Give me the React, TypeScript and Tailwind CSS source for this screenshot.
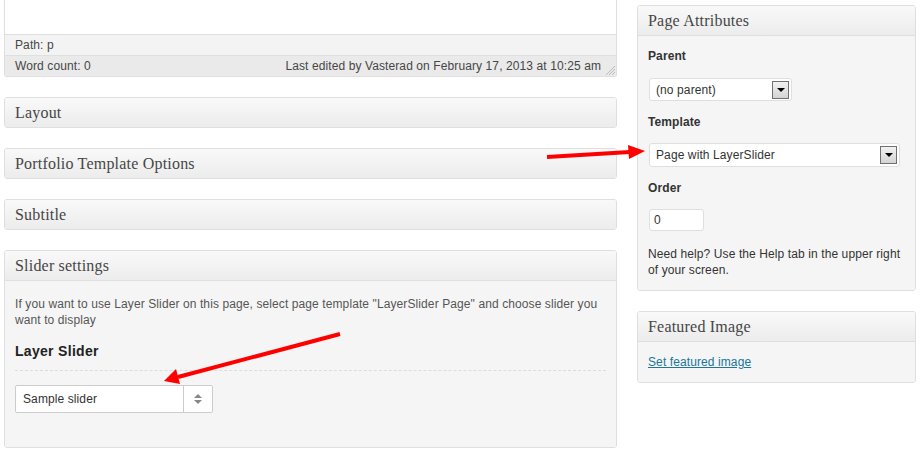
const serif = "font-['Liberation_Serif',Georgia,serif]";

const BoxHeader = ({ title }: { title: string }) => (
  <div className={`h-[29px] flex items-center px-[10px] bg-gradient-to-b from-[#f9f9f9] to-[#ececec] text-[16px] tracking-[0.2px] text-[#464646] ${serif}`}>
    {title}
  </div>
);

const ClosedBox = ({ title }: { title: string }) => (
  <div className="rounded-[3px] border border-[#dfdfdf] overflow-hidden">
    <BoxHeader title={title} />
  </div>
);

const WinSelect = ({ value, width, height }: { value: string; width: string; height: string }) => (
  <div className={`${width} ${height} flex items-center justify-between bg-white border border-[#dfdfdf] rounded-[3px] pl-[6px] pr-[2px] text-[12px] text-[#333]`}>
    <span>{value}</span>
    <span className="w-[17px] h-[18px] flex items-center justify-center border border-[#707070] bg-gradient-to-b from-[#f2f2f2] to-[#d4d4d4]">
      <span className="w-0 h-0 border-l-[4px] border-r-[4px] border-t-[4px] border-l-transparent border-r-transparent border-t-black" />
    </span>
  </div>
);

const App = () => {
  return (
    <div className="relative w-[923px] h-[452px] bg-white overflow-hidden font-['Liberation_Sans',Arial,sans-serif] tracking-[0.1px] text-[#333]">
      <div className="flex">
        <div className="ml-[4px] w-[613px] flex flex-col gap-[20px]">
          <div className="border-x border-b border-[#dfdfdf] rounded-b-[3px] overflow-hidden text-[12px] text-[#464646]">
            <div className="h-[34px] bg-white" />
            <div className="h-[21px] border-t border-[#dfdfdf] bg-[#f3f3f3] flex items-center px-[10px]">Path: p</div>
            <div className="relative h-[21px] border-t border-[#dfdfdf] bg-[#eaeaea] flex items-center justify-between px-[10px]">
              <span>Word count: 0</span>
              <span className="mr-[5px]">Last edited by Vasterad on February 17, 2013 at 10:25 am</span>
              <svg className="absolute right-0 bottom-0" width="12" height="12" viewBox="0 0 12 12">
                <path d="M11 2 L2 11 M11 5 L5 11 M11 8 L8 11" stroke="#bbb" strokeWidth="1" />
              </svg>
            </div>
          </div>
          <ClosedBox title="Layout" />
          <ClosedBox title="Portfolio Template Options" />
          <ClosedBox title="Subtitle" />
          <div className="rounded-[3px] border border-[#dfdfdf] overflow-hidden h-[198px] flex flex-col">
            <BoxHeader title="Slider settings" />
            <div className="flex-1 border-t border-[#dfdfdf] bg-[#f5f5f5] px-[10px] pt-[15px]">
              <p className="text-[12px] leading-[16px] text-[#555]">
                If you want to use Layer Slider on this page, select page template "LayerSlider Page" and choose slider you want to display
              </p>
              <h3 className="mt-[13px] text-[14px] font-bold text-[#222] tracking-[0.3px]">Layer Slider</h3>
              <div className="mt-[8px] border-t border-dashed border-[#dcdcdc]" />
              <div className="mt-[14px] w-[198px] h-[28px] flex bg-white border border-[#ccc] rounded-[2px]">
                <div className="flex-1 flex items-center pl-[7px] text-[12px] text-[#333] border-r border-[#ccc]">Sample slider</div>
                <div className="w-[28px] flex flex-col items-center justify-center gap-[2px]">
                  <span className="w-0 h-0 border-l-[4px] border-r-[4px] border-b-[4px] border-l-transparent border-r-transparent border-b-[#888]" />
                  <span className="w-0 h-0 border-l-[4px] border-r-[4px] border-t-[4px] border-l-transparent border-r-transparent border-t-[#888]" />
                </div>
              </div>
            </div>
          </div>
        </div>

        <div className="ml-[20px] w-[279px] pt-[5px] flex flex-col gap-[20px]">
          <div className="rounded-[3px] border border-[#dfdfdf] overflow-hidden">
            <BoxHeader title="Page Attributes" />
            <div className="border-t border-[#dfdfdf] bg-[#f5f5f5] px-[10px] pt-[11px] pb-[12px] text-[12px]">
              <div className="font-bold text-[#333]">Parent</div>
              <div className="mt-[13px] ml-[1px]">
                <WinSelect value="(no parent)" width="w-[143px]" height="h-[23px]" />
              </div>
              <div className="mt-[12px] font-bold text-[#333]">Template</div>
              <div className="mt-[12px] ml-[1px]">
                <WinSelect value="Page with LayerSlider" width="w-[251px]" height="h-[24px]" />
              </div>
              <div className="mt-[12px] font-bold text-[#333]">Order</div>
              <div className="mt-[12px] ml-[1px] w-[55px] h-[22px] bg-white border border-[#dfdfdf] rounded-[3px] flex items-center px-[4px]">0</div>
              <p className="mt-[15px] leading-[16px] text-[#333]">Need help? Use the Help tab in the upper right of your screen.</p>
            </div>
          </div>
          <div className="rounded-[3px] border border-[#dfdfdf] overflow-hidden">
            <BoxHeader title="Featured Image" />
            <div className="border-t border-[#dfdfdf] bg-[#f5f5f5] px-[10px] pt-[11px] pb-[11px] text-[12px]">
              <a className="text-[#21759b] underline">Set featured image</a>
            </div>
          </div>
        </div>
      </div>

      <svg className="absolute inset-0 pointer-events-none" width="923" height="452" viewBox="0 0 923 452">
        <line x1="547" y1="157" x2="630" y2="152" stroke="#ff0000" strokeWidth="4" />
        <polygon points="645,151 628,145 629,159" fill="#ff0000" />
        <line x1="340" y1="334" x2="178" y2="377" stroke="#ff0000" strokeWidth="4" />
        <polygon points="164,381 176,369 180,384" fill="#ff0000" />
      </svg>
    </div>
  );
};

export default App;
